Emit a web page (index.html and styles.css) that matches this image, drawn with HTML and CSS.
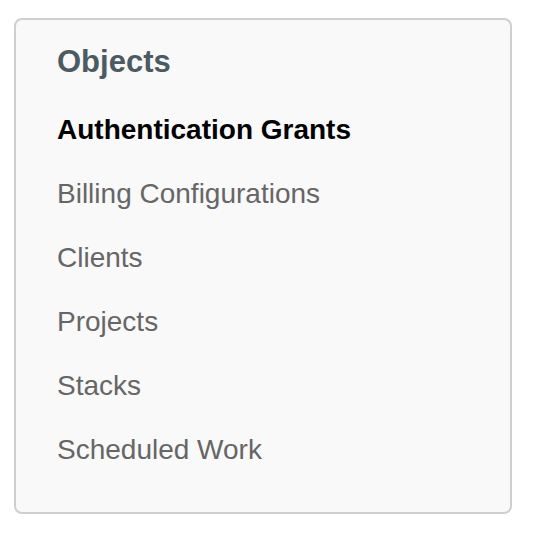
FILE: index.html
```html
<!DOCTYPE html>
<html lang="en">
<head>
    <meta charset="UTF-8">
    <meta name="viewport" content="width=device-width, initial-scale=1.0">
    <title>Objects</title>
    <link rel="stylesheet" href="styles.css">
</head>
<body>

    <!-- Sidebar panel -->
    <div class="panel">
        <h2 class="panel-title">Objects</h2>
        <ul class="nav-list">
            <li><a href="#" class="active">Authentication Grants</a></li>
            <li><a href="#">Billing Configurations</a></li>
            <li><a href="#">Clients</a></li>
            <li><a href="#">Projects</a></li>
            <li><a href="#">Stacks</a></li>
            <li><a href="#">Scheduled Work</a></li>
        </ul>
    </div>

</body>
</html>
```

FILE: styles.css
```css
body {
    margin: 0;
    padding: 18px 24px 0 14px;
    font-family: "Liberation Sans", Arial, sans-serif;
    background-color: #fff;
}

/* Panel box */
.panel {
    width: 494px;
    height: 492px;
    box-sizing: content-box;
    background-color: #f9f9f9;
    border: 2px solid #cfcfcf;
    border-radius: 8px;
    padding: 0;
}

.panel-title {
    margin: 0;
    padding: 24px 0 0 41px;
    font-size: 31px;
    line-height: 36px;
    font-weight: bold;
    color: #4c5a62;
}

.nav-list {
    list-style: none;
    margin: 18px 0 0 0;
    padding: 0 0 0 41px;
}

.nav-list li {
    line-height: 64px;
    font-size: 28px;
}

.nav-list a {
    color: #666;
    text-decoration: none;
}

.nav-list a.active {
    color: #000;
    font-weight: bold;
}
```
